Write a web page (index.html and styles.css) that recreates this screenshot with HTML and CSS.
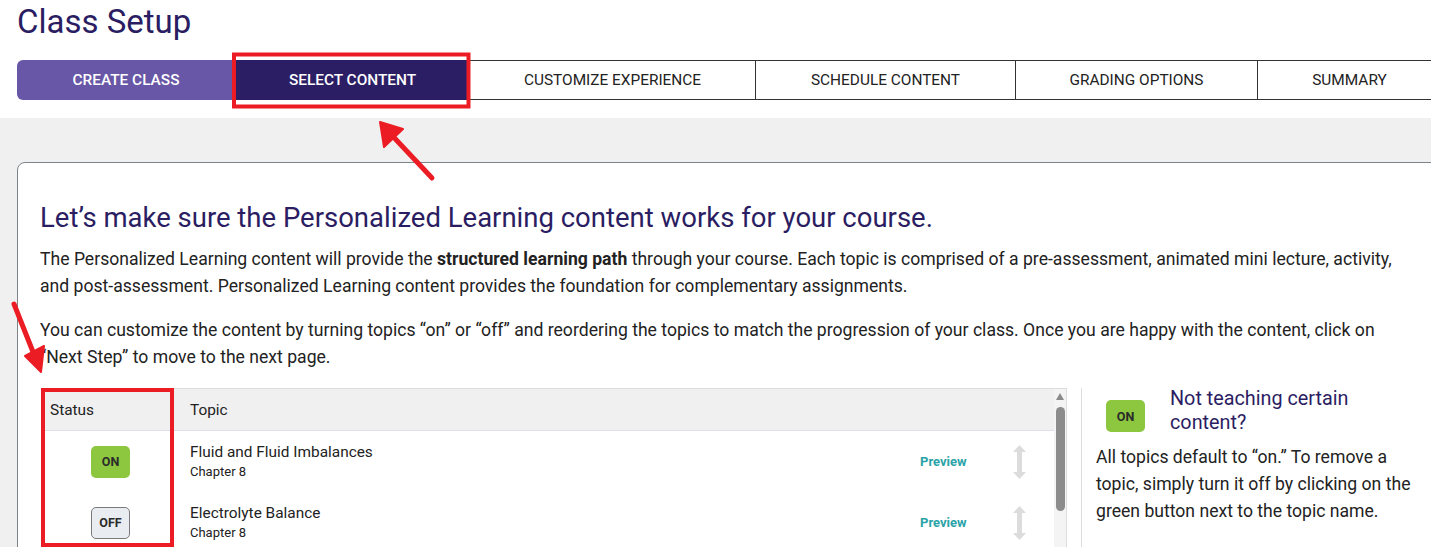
FILE: index.html
```html
<!DOCTYPE html>
<html lang="en">
<head>
<meta charset="utf-8">
<title>Class Setup</title>
<link rel="stylesheet" href="styles.css">
</head>
<body>
<div class="page">
  <header class="top">
    <h1 class="title">Class Setup</h1>
    <nav class="tabs">
      <div class="tab tab-done">CREATE CLASS</div>
      <div class="tab tab-active">SELECT CONTENT</div>
      <div class="tab">CUSTOMIZE EXPERIENCE</div>
      <div class="tab">SCHEDULE CONTENT</div>
      <div class="tab">GRADING OPTIONS</div>
      <div class="tab tab-last">SUMMARY</div>
    </nav>
  </header>
  <main class="stage">
    <section class="card">
      <h2 class="heading">Let’s make sure the Personalized Learning content works for your course.</h2>
      <p class="para">The Personalized Learning content will provide the <strong>structured learning path</strong> through your course. Each topic is comprised of a pre-assessment, animated mini lecture, activity, and post-assessment. Personalized Learning content provides the foundation for complementary assignments.</p>
      <p class="para">You can customize the content by turning topics “on” or “off” and reordering the topics to match the progression of your class. Once you are happy with the content, click on “Next Step” to move to the next page.</p>
      <div class="workarea">
        <div class="table">
          <div class="table-body">
            <div class="row head">
              <div class="c-status">Status</div>
              <div class="c-topic">Topic</div>
            </div>
            <div class="row">
              <div class="c-status"><span class="btn btn-on">ON</span></div>
              <div class="c-topic">
                <div class="t-name">Fluid and Fluid Imbalances</div>
                <div class="t-chap">Chapter 8</div>
              </div>
              <div class="c-preview">Preview</div>
              <div class="c-drag">
                <svg width="13" height="34" viewBox="0 0 13 34"><path d="M6.5 0 L13 7 L9 7 L9 27 L13 27 L6.5 34 L0 27 L4 27 L4 7 L0 7 Z" fill="#dcdcdc"/></svg>
              </div>
            </div>
            <div class="row">
              <div class="c-status"><span class="btn btn-off">OFF</span></div>
              <div class="c-topic">
                <div class="t-name">Electrolyte Balance</div>
                <div class="t-chap">Chapter 8</div>
              </div>
              <div class="c-preview">Preview</div>
              <div class="c-drag">
                <svg width="13" height="34" viewBox="0 0 13 34"><path d="M6.5 0 L13 7 L9 7 L9 27 L13 27 L6.5 34 L0 27 L4 27 L4 7 L0 7 Z" fill="#dcdcdc"/></svg>
              </div>
            </div>
          </div>
          <div class="scrollbar">
            <div class="sb-up"></div>
            <div class="sb-thumb"></div>
          </div>
        </div>
        <aside class="help">
          <div class="help-head">
            <span class="btn btn-on">ON</span>
            <h3 class="help-title">Not teaching certain content?</h3>
          </div>
          <p class="help-text">All topics default to “on.” To remove a topic, simply turn it off by clicking on the green button next to the topic name.</p>
        </aside>
      </div>
    </section>
  </main>
  <svg class="annot" width="1431" height="547" viewBox="0 0 1431 547">
    <rect x="234" y="54.5" width="234.5" height="52" fill="none" stroke="#ec1c24" stroke-width="4"/>
    <rect x="43" y="390" width="129" height="155" fill="none" stroke="#ec1c24" stroke-width="4"/>
    <line x1="432" y1="178" x2="386" y2="129" stroke="#ec1c24" stroke-width="5" stroke-linecap="round"/>
    <path d="M380 122 L384 147 L403 129 Z" fill="#ec1c24" stroke="#ec1c24" stroke-width="2" stroke-linejoin="round"/>
    <line x1="14" y1="304" x2="37" y2="362" stroke="#ec1c24" stroke-width="5" stroke-linecap="round"/>
    <path d="M41 372 L44 346 L25 356 Z" fill="#ec1c24" stroke="#ec1c24" stroke-width="2" stroke-linejoin="round"/>
  </svg>
</div>
</body>
</html>
```

FILE: styles.css
```css
html, body {
  margin: 0;
  padding: 0;
  background: #ffffff;
}
body {
  font-family: Roboto, "Liberation Sans", Arial, sans-serif;
  color: #222222;
  overflow: hidden;
  width: 1431px;
  height: 547px;
}
.page {
  position: relative;
  width: 1431px;
  height: 547px;
  overflow: hidden;
}
.top {
  padding: 0 0 18px 17px;
}
.title {
  margin: 0;
  padding-top: 3px;
  font-size: 33px;
  line-height: 38px;
  font-weight: 400;
  color: #2b1d62;
}
.tabs {
  margin-top: 19px;
  display: grid;
  grid-template-columns: 218px 235px 285px 260px 242px 184px;
  height: 40px;
  width: 1424px;
}
.tab {
  display: flex;
  align-items: center;
  justify-content: center;
  font-size: 15.4px;
  color: #222222;
  border-top: 1px solid #333333;
  border-bottom: 1px solid #333333;
  border-left: 1px solid #333333;
  box-sizing: border-box;
}
.tab-done {
  background: #6757a6;
  color: #ffffff;
  border: none;
  border-radius: 6px 0 0 6px;
  font-weight: 500;
}
.tab-active {
  background: #2c1e65;
  color: #ffffff;
  border: none;
  font-weight: 500;
}
.tab-active + .tab {
  border-left: none;
}
.stage {
  background: #f0f0f0;
  padding: 44px 0 0 17px;
  height: 600px;
}
.card {
  background: #ffffff;
  border: 1px solid #7d858a;
  border-radius: 8px 0 0 0;
  width: 1440px;
  box-sizing: border-box;
  padding: 37px 0 0 22px;
  height: 600px;
}
.heading {
  margin: 0;
  font-size: 27.5px;
  line-height: 36px;
  font-weight: 400;
  color: #2b1d62;
}
.para {
  margin: 10px 0 0 0;
  width: 1375px;
  font-size: 17.6px;
  line-height: 27px;
  color: #222222;
}
.para + .para {
  margin-top: 17px;
}
.workarea {
  margin-top: 17px;
  display: flex;
  align-items: flex-start;
}
.table {
  width: 1026px;
  margin-left: 1px;
  display: flex;
  border-top: 1px solid #dddddd;
  border-right: 1px solid #dddddd;
  height: 200px;
  box-sizing: border-box;
}
.table-body {
  flex: 1;
}
.row {
  display: flex;
  align-items: center;
  height: 61px;
}
.row.head {
  height: 41px;
  background: #f0f0f0;
  border-bottom: 1px solid #dde0e8;
  font-size: 15.4px;
}
.c-status {
  width: 134px;
  box-sizing: border-box;
  padding-left: 9px;
}
.row:not(.head) .c-status {
  padding-left: 50px;
}
.c-topic {
  width: 15px;
  flex: 1;
  padding-left: 15px;
}
.t-name {
  font-size: 15.4px;
  line-height: 20px;
  color: #222222;
}
.t-chap {
  font-size: 13px;
  line-height: 20px;
  color: #222222;
}
.c-preview {
  width: 93px;
  font-size: 13px;
  font-weight: 700;
  color: #2aa3a8;
}
.c-drag {
  width: 41px;
  display: flex;
  align-items: center;
}
.c-drag svg {
  display: block;
}
.btn {
  display: inline-flex;
  align-items: center;
  justify-content: center;
  width: 39px;
  height: 32px;
  box-sizing: border-box;
  border-radius: 5px;
  font-size: 12.5px;
  font-weight: 700;
  color: #2a2a2a;
}
.btn-on {
  background: #8dc63f;
}
.btn-off {
  background: #e9edf1;
  border: 1px solid #7a7a7a;
}
.scrollbar {
  width: 12px;
  background: #f4f4f4;
  display: flex;
  flex-direction: column;
  align-items: center;
}
.sb-up {
  margin-top: 4px;
  width: 0;
  height: 0;
  border-left: 4px solid transparent;
  border-right: 4px solid transparent;
  border-bottom: 7px solid #8a8a8a;
}
.sb-thumb {
  margin-top: 7px;
  width: 9px;
  height: 104px;
  border-radius: 5px;
  background: #8c8c8c;
}
.help {
  margin-left: 14px;
  border-left: 1px solid #dddddd;
  padding: 8px 0 0 14px;
  width: 320px;
  height: 200px;
  box-sizing: content-box;
}
.help-head {
  display: flex;
  align-items: flex-start;
  gap: 25px;
  padding-left: 10px;
}
.help-head .btn {
  margin-top: 4px;
  flex: none;
}
.help-title {
  margin: -9px 0 0 0;
  font-size: 19.8px;
  line-height: 24px;
  font-weight: 400;
  color: #2b1d62;
  width: 200px;
}
.help-text {
  margin: 9px 0 0 0;
  font-size: 17.6px;
  line-height: 27px;
  color: #222222;
}
.annot {
  position: absolute;
  left: 0;
  top: 0;
  pointer-events: none;
}
```
